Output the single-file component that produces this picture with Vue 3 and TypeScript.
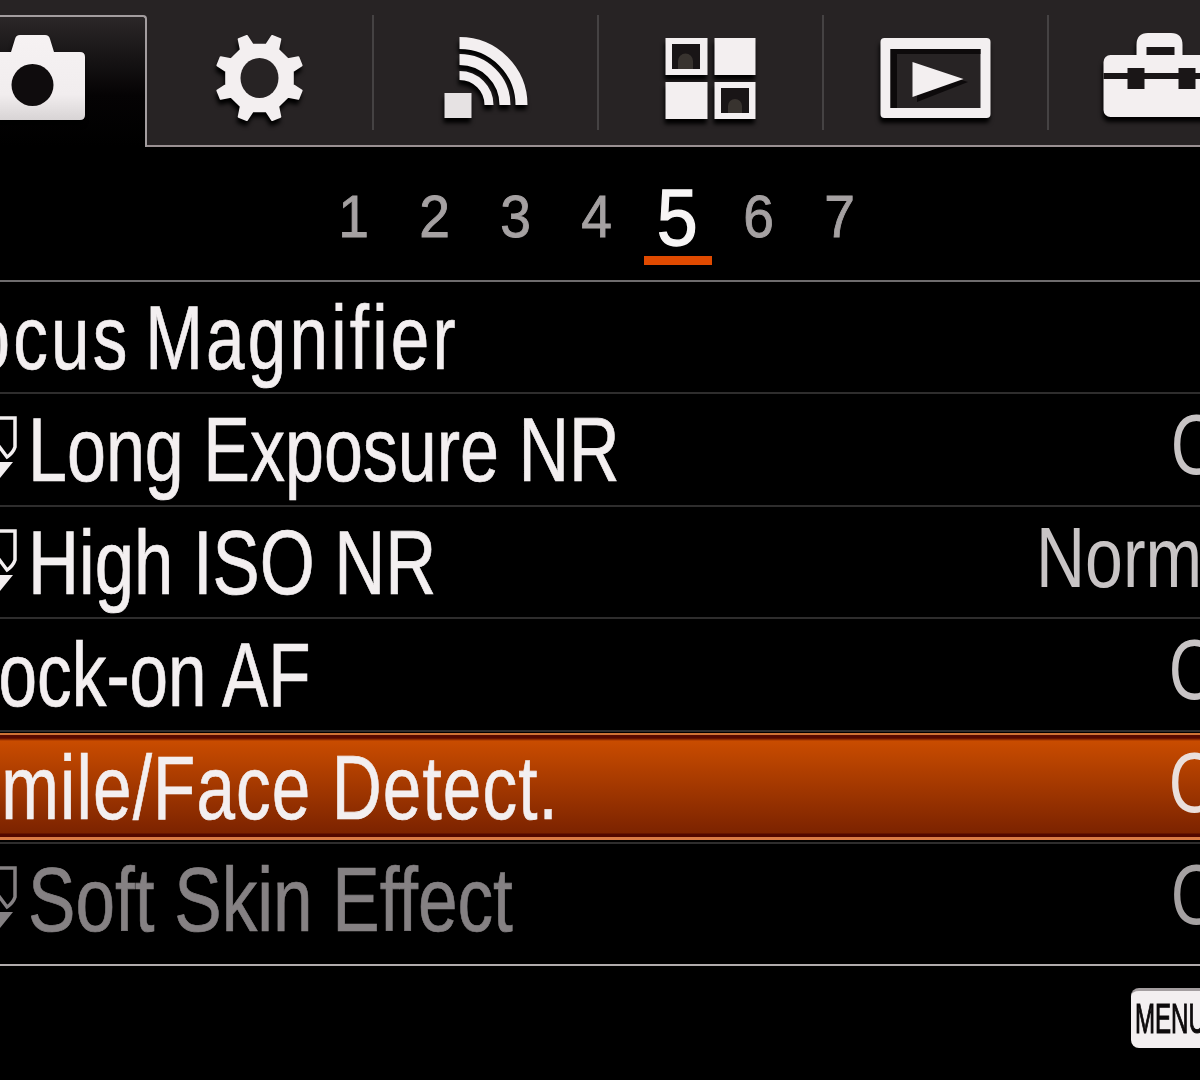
<script setup lang="ts">
interface Row { label: string; value: string; tone: string; icon?: boolean; dim?: boolean; sel?: boolean }
const rows: Row[] = [
  { label: 'Focus Magnifier', value: '', tone: 'loose' },
  { label: 'Long Exposure NR', value: 'On', tone: 'iconed long', icon: true },
  { label: 'High ISO NR', value: 'Normal', tone: 'iconed', icon: true },
  { label: 'Lock-on AF', value: 'Off', tone: 'plain' },
  { label: 'Smile/Face Detect.', value: 'Off', tone: 'selected', sel: true },
  { label: 'Soft Skin Effect', value: 'On', tone: 'iconed soft', icon: true, dim: true },
]
const digits = [1, 2, 3, 4, 5, 6, 7]
function gear(cx: number, cy: number): string {
  const pts: string[] = []
  const n = 8
  for (let i = 0; i < n; i++) {
    const a = ((i + 0.5) * 2 * Math.PI) / n
    const offs: Array<[number, number]> = [[-0.19, 34], [-0.1, 44], [0.1, 44], [0.19, 34]]
    for (const [d, r] of offs) {
      pts.push(`${(cx + r * Math.cos(a + d)).toFixed(1)},${(cy + r * Math.sin(a + d)).toFixed(1)}`)
    }
  }
  return pts.join(' ')
}
const gearPoints = gear(68.5, 48)
</script>

<template>
  <div class="screen">
    <div class="tabs">
      <div class="tab active">
        <svg class="ico" viewBox="0 0 140 100" width="140" height="100">
          <defs>
            <linearGradient id="body" x1="0" y1="0" x2="0" y2="1">
              <stop offset="0" stop-color="#f6f2f3" />
              <stop offset="0.7" stop-color="#f1edee" />
              <stop offset="1" stop-color="#d8d4d5" />
            </linearGradient>
          </defs>
          <path fill="url(#body)" d="M47 22 L51 9 Q52 5 56 5 H81 Q85 5 86 9 L90 22 H116 Q121 22 121 27 V85 Q121 90 116 90 H21 Q16 90 16 85 V27 Q16 22 21 22 Z" />
          <circle cx="68.5" cy="55" r="21" fill="#0f0c0d" />
        </svg>
      </div>
      <div class="tab">
        <svg class="ico" viewBox="0 0 140 100" width="140" height="100">
          <polygon class="w" stroke="#f3eff0" stroke-width="2" stroke-linejoin="round" :points="gearPoints" />
          <ellipse cx="68.5" cy="48" rx="19" ry="20" fill="#272324" />
        </svg>
      </div>
      <i class="sep"></i>
      <div class="tab">
        <svg class="ico" viewBox="0 0 140 100" width="140" height="100">
          <rect x="28.5" y="63" width="27" height="25" fill="#e6e2e3" />
          <g fill="none" stroke="#f3eff0">
            <path stroke-width="12" d="M43.5 13 A62 62 0 0 1 105.5 75" />
            <path stroke-width="11" d="M43.5 29.5 A45.5 45.5 0 0 1 89 75" />
            <path stroke-width="9" d="M43.5 45.5 A29.5 29.5 0 0 1 73 75" />
          </g>
        </svg>
      </div>
      <i class="sep"></i>
      <div class="tab">
        <svg class="ico" viewBox="0 0 140 100" width="140" height="100">
          <rect class="w" x="24.5" y="8" width="42" height="37" />
          <rect x="31" y="14" width="28" height="25" fill="#191516" />
          <path d="M37 39 V31 A7 7 0 0 1 52 31 V39 Z" fill="#38332f" />
          <rect class="w" x="73.5" y="8" width="41" height="37" />
          <rect class="w" x="24.5" y="52" width="42" height="37" />
          <rect class="w" x="73.5" y="52" width="41" height="37" />
          <rect x="80" y="58" width="28" height="25" fill="#191516" />
          <path d="M87 83 V76 A7 7 0 0 1 101 76 V83 Z" fill="#38332f" />
        </svg>
      </div>
      <i class="sep"></i>
      <div class="tab">
        <svg class="ico" viewBox="0 0 140 100" width="140" height="100">
          <rect class="w" x="14.5" y="8" width="110" height="80" rx="4" />
          <rect x="24.5" y="19" width="90" height="59" fill="#272324" />
          <path d="M24.5 19 H114.5 V24 H31 V78 H24.5 Z" fill="#0d0a0b" />
          <polygon points="51,36 102,52 51,72" fill="#0d0a0b" />
          <polygon class="w" points="46.5,32 97.5,49 46.5,67" />
        </svg>
      </div>
      <i class="sep"></i>
      <div class="tab">
        <svg class="ico" viewBox="0 0 140 100" width="140" height="100">
          <path class="w" d="M45.5 27 V15 Q45.5 3 57 3 H80 Q91.5 3 91.5 15 V27 Z" />
          <rect x="55.5" y="17" width="28" height="10" fill="#1a1617" />
          <rect class="w" x="12.5" y="25" width="115" height="62" rx="7" />
          <rect x="12.5" y="43" width="115" height="6" fill="#1a1617" />
          <rect x="36.5" y="38" width="17" height="21" fill="#1a1617" />
          <rect x="87.5" y="38" width="17" height="21" fill="#1a1617" />
        </svg>
      </div>
    </div>

    <div class="pages">
      <div v-for="d in digits" :key="d" class="digit" :class="{ current: d === 5 }">
        <span>{{ d }}</span>
        <b v-if="d === 5" class="mark"></b>
      </div>
    </div>

    <div class="list">
      <div v-for="r in rows" :key="r.label" class="row" :class="{ sel: r.sel, dim: r.dim }">
        <svg v-if="r.icon" class="shield" viewBox="0 0 66 66" width="66" height="66">
          <g fill="none" :stroke="r.dim ? '#858183' : '#f3eff0'" stroke-width="3.5">
            <path d="M20 3 H61 V32 Q59 38 53 42 L44 30" />
          </g>
          <polygon points="46,47 59,47 46,63" :fill="r.dim ? '#858183' : '#f3eff0'" />
        </svg>
        <span class="label" :class="r.tone">{{ r.label }}</span>
        <span class="value" :class="{ wide: r.value === 'Normal', off: r.value === 'Off' }">{{ r.value }}</span>
      </div>
    </div>

    <div class="foot">
      <div class="menu"><span>MENU</span></div>
    </div>
  </div>
</template>

<style scoped>
.screen {
  position: relative;
  width: 1200px;
  height: 1080px;
  overflow: hidden;
  background: #000;
  color: #f3eff0;
  font-family: "Liberation Sans", Arial, sans-serif;
}
.tabs {
  display: flex;
  height: 145px;
  background: #272324;
  border-bottom: 2px solid #9a9092;
}
.tab {
  flex: none;
  width: 225px;
  height: 145px;
  display: flex;
  justify-content: center;
}
.tab.active {
  box-sizing: border-box;
  width: 224px;
  height: 132px;
  margin: 15px 1px -2px -77px;
  border-top: 2px solid #a39d9f;
  border-right: 2px solid #a39d9f;
  border-top-right-radius: 4px;
  background: linear-gradient(#2b2728, #050304 60%, #000);
  position: relative;
}
.tab.active .ico { margin-top: 13px; }
.ico {
  flex: none;
  margin-top: 30px;
  overflow: visible;
  filter: drop-shadow(-1px 5px 2px #000);
}
.w { fill: #f3eff0; }
.sep {
  flex: none;
  width: 2px;
  height: 115px;
  margin: 15px -1px 0;
  background: #454243;
  position: relative;
}
.pages {
  box-sizing: border-box;
  height: 135px;
  display: flex;
  justify-content: center;
  padding-right: 7px;
  border-bottom: 2px solid #6e6c6d;
}
.digit {
  flex: none;
  width: 81px;
  display: flex;
  flex-direction: column;
  align-items: center;
  padding-top: 40px;
  font-size: 60px;
  line-height: 60px;
  color: #a5a1a2;
  -webkit-text-stroke: .9px currentColor;
}
.digit span { display: block; transform: scaleX(.92); }
.digit.current {
  padding-top: 31px;
  font-size: 80px;
  line-height: 80px;
  color: #f7f5f5;
  -webkit-text-stroke: 1.4px currentColor;
}
.mark {
  width: 68px;
  height: 9px;
  margin-top: -2px;
  background: #e04a00;
}
.list {
  box-sizing: border-box;
  border-bottom: 2px solid #b0abac;
}
.row {
  box-sizing: border-box;
  height: 112.4px;
  display: flex;
  align-items: flex-start;
  border-bottom: 2px solid #2e2d2d;
  font-size: 90px;
  line-height: 112px;
  white-space: nowrap;
}
.row:last-child {
  height: 120px;
  border-bottom: 0;
}
.row.sel {
  background: linear-gradient(#000 0 1px, #cf7436 1px 3px, #570a00 3px 6px, #c94c00 9px, #7c2300 calc(100% - 9px), #520800 calc(100% - 8px) calc(100% - 5px), #d97a45 calc(100% - 5px) calc(100% - 2px), #000 calc(100% - 2px));
}
.row.dim { color: #858183; }
.shield {
  flex: none;
  margin: 21px 8px 0 -46px;
}
.label {
  flex: 1;
  min-width: 0;
  transform: scaleX(.77);
  transform-origin: left center;
  -webkit-text-stroke: .7px currentColor;
}
.label.loose { margin-left: -74px; letter-spacing: 4.1px; word-spacing: -10px; }
.label.plain { margin-left: -40px; }
.label.selected { margin-left: -46px; letter-spacing: 1.4px; }
.label.iconed { transform: scaleX(.785); }
.label.long { transform: scaleX(.778); }
.label.soft { transform: scaleX(.79); }
.value {
  flex: none;
  width: 29px;
  margin-top: -5px;
  font-size: 85px;
  color: #c8c4c5;
  transform: scaleX(.77);
  transform-origin: left center;
}
.row.sel .value { color: #eadfdb; }
.row.dim .value { color: #a5a1a2; }
.value.off { width: 31px; }
.value.wide { width: 164px; transform: scaleX(.8); }
.foot {
  height: 113px;
  display: flex;
  justify-content: flex-end;
  padding-top: 22px;
  box-sizing: border-box;
}
.menu {
  flex: none;
  width: 90px;
  height: 60px;
  margin-right: -21px;
  box-sizing: border-box;
  border-top: 3px solid #a39d9f;
  border-radius: 8px;
  background: #f3eff0;
  color: #0d0a0b;
  font-size: 43px;
  line-height: 55px;
  padding-left: 4px;
  overflow: hidden;
}
.menu span {
  display: block;
  white-space: nowrap;
  transform: scaleX(.56);
  transform-origin: left center;
  -webkit-text-stroke: 1.2px currentColor;
}
</style>
<style>
html, body { margin: 0; background: #000; }
</style>
